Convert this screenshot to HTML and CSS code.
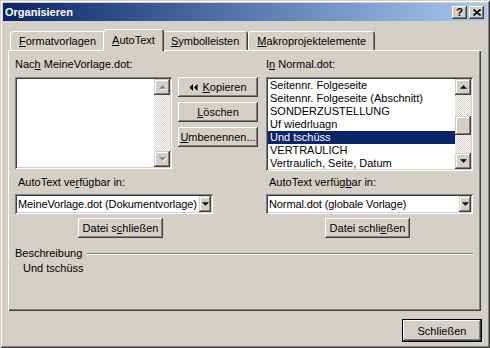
FILE: index.html
```html
<!DOCTYPE html>
<html lang="de">
<head>
  <meta charset="UTF-8" />
  <title>Organisieren</title>
  <link rel="stylesheet" href="styles.css">
</head>
<body>

  <div class="window">

    <!-- Titelleiste -->
    <div class="titlebar">
      <span class="title">Organisieren</span>
      <div class="caption-buttons">
        <span class="cap-btn help">?</span>
        <span class="cap-btn close">
          <svg width="8" height="7" viewBox="0 0 8 7"><path d="M0.5 0.5 L7.5 6.5 M7.5 0.5 L0.5 6.5" stroke="#000" stroke-width="1.6"/></svg>
        </span>
      </div>
    </div>

    <!-- Registerkarten -->
    <div class="tabs">
      <div class="tab"><u>F</u>ormatvorlagen</div>
      <div class="tab active"><u>A</u>utoText</div>
      <div class="tab"><u>S</u>ymbolleisten</div>
      <div class="tab"><u>M</u>akroprojektelemente</div>
    </div>

    <div class="panel">

      <div class="lists">
        <div class="col col-left">
          <div class="label">Nac<u>h</u> MeineVorlage.dot:</div>
          <div class="listbox">
            <div class="items"></div>
            <div class="scrollbar disabled">
              <div class="sb-btn"><svg width="7" height="4" viewBox="0 0 8 4"><polygon points="0,4 4,0 8,4" /></svg></div>
              <div class="sb-track"></div>
              <div class="sb-btn"><svg width="7" height="4" viewBox="0 0 8 4"><polygon points="0,0 8,0 4,4" /></svg></div>
            </div>
          </div>
        </div>

        <div class="col col-mid">
          <button class="btn">
            <svg class="copy-icon" width="9" height="7" viewBox="0 0 9 7"><polygon points="4,0 4,7 0.5,3.5" /><polygon points="8.5,0 8.5,7 5,3.5" /></svg><u>K</u>opieren
          </button>
          <button class="btn"><u>L</u>öschen</button>
          <button class="btn"><u>U</u>mbenennen...</button>
        </div>

        <div class="col col-right">
          <div class="label">I<u>n</u> Normal.dot:</div>
          <div class="listbox tall">
            <div class="items">
              <div class="item">Seitennr. Folgeseite</div>
              <div class="item">Seitennr. Folgeseite (Abschnitt)</div>
              <div class="item">SONDERZUSTELLUNG</div>
              <div class="item">Uf wiedrluagn</div>
              <div class="item selected">Und tschüss</div>
              <div class="item">VERTRAULICH</div>
              <div class="item">Vertraulich, Seite, Datum</div>
            </div>
            <div class="scrollbar">
              <div class="sb-btn"><svg width="7" height="4" viewBox="0 0 8 4"><polygon points="0,4 4,0 8,4" /></svg></div>
              <div class="sb-track top"></div>
              <div class="sb-btn thumb"></div>
              <div class="sb-track"></div>
              <div class="sb-btn"><svg width="7" height="4" viewBox="0 0 8 4"><polygon points="0,0 8,0 4,4" /></svg></div>
            </div>
          </div>
        </div>
      </div>

      <div class="avail">
        <div class="avail-col avail-left">
          <div class="label">AutoText ve<u>r</u>fügbar in:</div>
          <div class="combo">
            <span class="combo-text">MeineVorlage.dot (Dokumentvorlage)</span>
            <span class="combo-btn"><svg width="7" height="4" viewBox="0 0 8 4"><polygon points="0,0 8,0 4,4" /></svg></span>
          </div>
          <button class="btn file-btn">Datei s<u>c</u>hließen</button>
        </div>
        <div class="avail-col avail-right">
          <div class="label">AutoText verfüg<u>b</u>ar in:</div>
          <div class="combo">
            <span class="combo-text">Normal.dot (globale Vorlage)</span>
            <span class="combo-btn"><svg width="7" height="4" viewBox="0 0 8 4"><polygon points="0,0 8,0 4,4" /></svg></span>
          </div>
          <button class="btn file-btn">Datei schli<u>e</u>ßen</button>
        </div>
      </div>

      <div class="group">
        <div class="group-head">
          <span>Beschreibung</span>
          <span class="group-line"></span>
        </div>
        <div class="group-body">Und tschüss</div>
      </div>

    </div>

    <div class="footer">
      <button class="btn default">Schließen</button>
    </div>

  </div>

</body>
</html>
```

FILE: styles.css
```css
* {
  box-sizing: border-box;
}
body, html {
  margin: 0;
  padding: 0;
  background: #d4d0c8;
  font-family: 'Liberation Sans', Arial, sans-serif;
  font-size: 11px;
  color: #000;
}
u {
  text-decoration: underline;
  text-underline-offset: 1px;
}
.window {
  width: 490px;
  height: 348px;
  padding: 3px;
  background: #d4d0c8;
  box-shadow: inset 1px 1px #d4d0c8, inset -1px -1px #404040, inset 2px 2px #fff, inset -2px -2px #808080;
  display: flex;
  flex-direction: column;
}

/* Titelleiste */
.titlebar {
  height: 18px;
  display: flex;
  align-items: center;
  justify-content: space-between;
  padding: 0 3px 0 2px;
  background: linear-gradient(to right, #0a246a, #a6caf0);
  color: #fff;
  font-weight: bold;
}
.caption-buttons {
  display: flex;
  gap: 2px;
}
.cap-btn {
  width: 15px;
  height: 13px;
  display: flex;
  align-items: center;
  justify-content: center;
  background: #d4d0c8;
  color: #000;
  font-size: 11px;
  font-weight: bold;
  box-shadow: inset -1px -1px #404040, inset 1px 1px #fff, inset -2px -2px #808080;
}

/* Registerkarten */
.tabs {
  display: flex;
  align-items: flex-end;
  height: 21px;
  margin-top: 8px;
  padding-left: 7px;
}
.tab {
  height: 19px;
  padding: 2px 9px 0;
  line-height: 17px;
  white-space: nowrap;
  background: #d4d0c8;
  border-radius: 3px 3px 0 0;
  box-shadow: inset 1px 1px #fff, inset -1px 0 #404040, inset -2px 0 #808080;
}
.tab.active {
  position: relative;
  z-index: 1;
  height: 22px;
  margin: 0 -2px -1px;
  padding-top: 3px;
}

.panel {
  height: 261px;
  margin: 0 6px 0 5px;
  padding: 8px 8px 0 7px;
  box-shadow: inset 1px 1px #fff, inset -1px -1px #404040, inset -2px -2px #808080;
}
.label {
  height: 13px;
  line-height: 13px;
  white-space: nowrap;
}

/* Listen */
.lists {
  display: flex;
}
.col-left {
  width: 157px;
}
.col-mid {
  width: 80px;
  margin-left: 6px;
  padding-top: 19px;
  display: flex;
  flex-direction: column;
  gap: 5px;
}
.col-right {
  width: 207px;
  margin-left: 8px;
}
.col .label {
  margin-bottom: 6px;
}
.listbox {
  height: 92px;
  padding: 2px;
  display: flex;
  background: #fff;
  box-shadow: inset 1px 1px #808080, inset -1px -1px #fff, inset 2px 2px #404040, inset -2px -2px #d4d0c8;
}
.listbox.tall {
  height: 94px;
}
.items {
  flex: 1;
  overflow: hidden;
}
.item {
  height: 13px;
  line-height: 13px;
  padding-left: 2px;
  white-space: nowrap;
}
.item.selected {
  background: #0a246a;
  color: #fff;
}
.scrollbar {
  width: 16px;
  display: flex;
  flex-direction: column;
}
.sb-btn {
  height: 16px;
  flex: none;
  display: flex;
  align-items: center;
  justify-content: center;
  background: #d4d0c8;
  box-shadow: inset -1px -1px #404040, inset 1px 1px #d4d0c8, inset -2px -2px #808080, inset 2px 2px #fff;
}
.sb-btn svg {
  fill: #000;
}
.scrollbar.disabled .sb-btn svg {
  fill: #808080;
  filter: drop-shadow(1px 1px 0 #fff);
}
.sb-btn.thumb {
  height: 19px;
}
.sb-track {
  flex: 1;
  background: repeating-conic-gradient(#fff 0 25%, #d4d0c8 0 50%) 0 0 / 2px 2px;
}
.sb-track.top {
  flex: none;
  height: 21px;
}

/* Schaltflächen */
.btn {
  height: 20px;
  padding: 0;
  border: none;
  background: #d4d0c8;
  font: inherit;
  color: #000;
  white-space: nowrap;
  overflow: hidden;
  display: flex;
  align-items: center;
  justify-content: center;
  box-shadow: inset -1px -1px #404040, inset 1px 1px #fff, inset -2px -2px #808080;
}
.copy-icon {
  fill: #000;
  margin-right: 4px;
}

/* Verfügbar in */
.avail {
  display: flex;
  margin-top: 5px;
}
.avail-left {
  width: 198px;
}
.avail-right {
  width: 207px;
  margin-left: 53px;
}
.avail .label {
  padding-left: 3px;
  margin-bottom: 5px;
}
.combo {
  height: 20px;
  padding: 2px;
  display: flex;
  background: #fff;
  box-shadow: inset 1px 1px #808080, inset -1px -1px #fff, inset 2px 2px #404040, inset -2px -2px #d4d0c8;
}
.combo-text {
  flex: 1;
  padding-left: 1px;
  line-height: 16px;
  letter-spacing: -0.1px;
  white-space: nowrap;
  overflow: hidden;
}
.combo-btn {
  width: 12px;
  display: flex;
  align-items: center;
  justify-content: center;
  background: #d4d0c8;
  box-shadow: inset -1px -1px #404040, inset 1px 1px #d4d0c8, inset -2px -2px #808080, inset 2px 2px #fff;
}
.combo-btn svg {
  fill: #000;
}
.file-btn {
  width: 85px;
  margin-top: 4px;
}
.avail-left .file-btn {
  margin-left: 63px;
}
.avail-right .file-btn {
  margin-left: 59px;
}

/* Beschreibung */
.group {
  margin-top: 9px;
}
.group-head {
  display: flex;
  align-items: center;
  height: 13px;
  line-height: 13px;
}
.group-line {
  flex: 1;
  margin-left: 5px;
  border-top: 1px solid #808080;
  border-bottom: 1px solid #fff;
}
.group-body {
  margin-top: 2px;
  padding-left: 8px;
  line-height: 13px;
}

.footer {
  display: flex;
  justify-content: flex-end;
  margin-top: 8px;
  padding-right: 5px;
}
.btn.default {
  width: 80px;
  height: 23px;
  box-shadow: inset 0 0 0 1px #000, inset -2px -2px #404040, inset 2px 2px #fff, inset -3px -3px #808080;
}
```
